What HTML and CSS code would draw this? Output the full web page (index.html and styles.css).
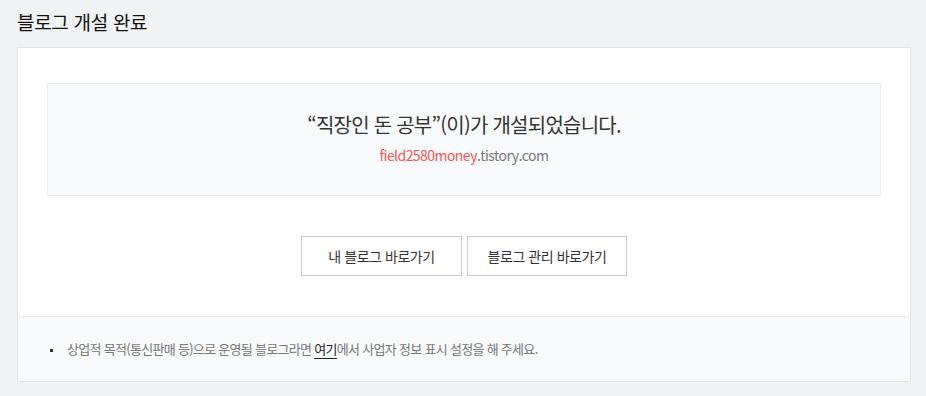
FILE: index.html
```html
<!DOCTYPE html>
<html lang="ko">
<head>
<meta charset="utf-8">
<title>블로그 개설 완료</title>
<link rel="stylesheet" href="styles.css">
</head>
<body>
<div class="page">
  <h2 class="title">블로그 개설 완료</h2>
  <div class="card">
    <div class="main">
      <div class="notice">
        <p class="headline">“직장인 돈 공부”(이)가 개설되었습니다.</p>
        <p class="url"><span class="id">field2580money</span>.tistory.com</p>
      </div>
      <div class="buttons">
        <a class="btn btn-first" href="#">내 블로그 바로가기</a>
        <a class="btn btn-second" href="#">블로그 관리 바로가기</a>
      </div>
    </div>
    <div class="foot">
      <ul class="info">
        <li>상업적 목적(통신판매 등)으로 운영될 블로그라면 <a href="#" class="link">여기</a>에서 사업자 정보 표시 설정을 해 주세요.</li>
      </ul>
    </div>
  </div>
</div>
</body>
</html>
```
FILE: styles.css
```css
html, body {
  margin: 0;
  padding: 0;
  background: #f2f3f5;
}
body {
  font-family: "Noto Sans CJK KR", "Noto Sans", sans-serif;
  color: #333;
}
.page {
  padding: 0 15px 0 17px;
}
.title {
  margin: 0;
  padding-top: 6px;
  height: 41px;
  font-size: 19px;
  font-weight: 400;
  line-height: 32px;
  color: #111;
  letter-spacing: -0.3px;
}
.card {
  width: 892px;
  background: #fff;
  border: 1px solid #e1e4ea;
}
.main {
  padding: 35px 29px 40px;
}
.notice {
  height: 111px;
  background: #f9fafc;
  border: 1px solid #eceef2;
  text-align: center;
  box-sizing: content-box;
}
.headline {
  margin: 0;
  padding-top: 25px;
  font-size: 20px;
  line-height: 32px;
  color: #333;
  letter-spacing: -0.75px;
}
.url {
  margin: 0;
  padding-top: 4px;
  font-size: 14px;
  line-height: 20px;
  color: #777;
  letter-spacing: -0.55px;
}
.url .id {
  color: #f55656;
}
.buttons {
  display: flex;
  justify-content: center;
  gap: 5px;
  margin-top: 40px;
}
.btn {
  display: flex;
  align-items: center;
  justify-content: center;
  box-sizing: border-box;
  height: 40px;
  border: 1px solid #c6ccd6;
  background: #fff;
  color: #333;
  font-size: 14px;
  text-decoration: none;
  letter-spacing: -0.45px;
}
.btn-first { width: 161px; }
.btn-second { width: 160px; }
.foot {
  height: 64px;
  border-top: 1px solid #eceef2;
  background: #f9fafc;
}
.info {
  margin: 0;
  padding: 22px 0 0 49px;
  font-size: 13px;
  line-height: 20px;
  color: #777;
  letter-spacing: -0.7px;
}
.info li {
  list-style: none;
  position: relative;
}
.info li::before {
  content: "";
  position: absolute;
  left: -17px;
  top: 10px;
  width: 3px;
  height: 3px;
  background: #333;
}
.link {
  color: #222;
  text-decoration: none;
  border-bottom: 1px solid #222;
}
```
